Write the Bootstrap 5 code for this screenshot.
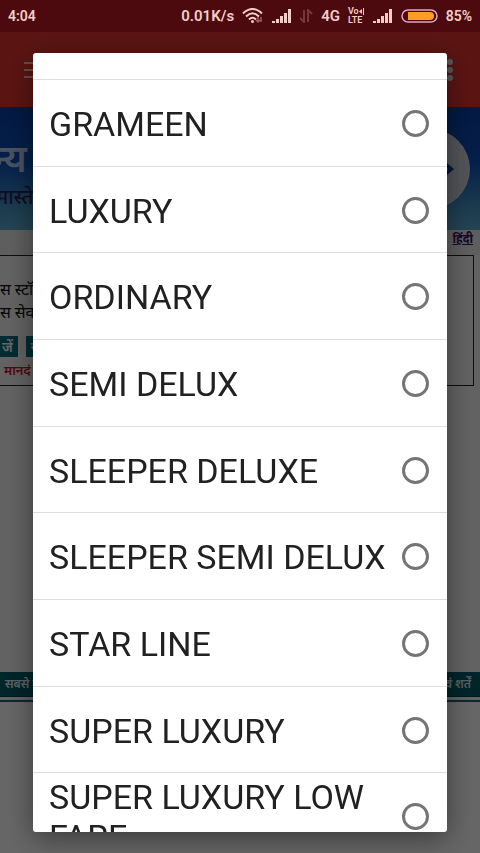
<!DOCTYPE html>
<html lang="en">
<head>
<meta charset="utf-8">
<meta name="viewport" content="width=device-width, initial-scale=1">
<title>Select bus type</title>
<link href="https://cdn.jsdelivr.net/npm/bootstrap@5.3.0/dist/css/bootstrap.min.css" rel="stylesheet">
<style>
body { font-family: Roboto, "Noto Sans", "Noto Sans Devanagari", sans-serif; background: #fff; }
.status-bar { height: 32px; background: #4c0a0e; color: #f3cdc9; font-size: 14px; font-weight: 600; padding: 0 8px; gap: 8px; z-index: 1060; }
.status-bar .speed { font-size: 15px; }
.status-bar svg { display: block; flex: none; }
.volte { font-size: 9px; line-height: 9px; }
.status-bar .volte svg { display: inline-block; }
.app-bar { height: 75px; background: #e2352f; padding: 0 24px; }
.bar-btn { border: 0; background: none; padding: 0; line-height: 0; }
.hero { height: 123px; background: linear-gradient(#0a3fa8, #0c4fba 45%, #4a9bc8 85%, #5fa9cc); color: #b8cdea; overflow: hidden; }
.hero-title { font-size: 38px; line-height: 44px; font-weight: 600; margin-left: -8px; }
.hero-sub { font-size: 20px; line-height: 24px; color: #2c2050; font-weight: 500; margin-left: -4px; }
.hero-next { width: 80px; height: 80px; border: 0; border-radius: 50%; background: #cdd4de; margin-right: 10px; padding: 0 14px 0 0; }
.lang { height: 25px; background: #ececec; padding: 0 7px; font-size: 12px; line-height: 18px; }
.lang a { color: #3b1466; font-weight: 700; }
.notice { height: 131px; border: 1px solid #222; border-left: 0; margin-right: 6px; font-size: 16px; line-height: 23px; color: #111; padding-top: 22px; overflow: hidden; }
.tag-btn { border: 0; border-radius: 0; background: #006b7c; color: #fff; height: 21px; font-size: 14px; line-height: 20px; padding: 0 5px; font-weight: 600; }
.tag-btn.first { padding-left: 2px; }
.crit { color: #d01020; font-size: 13px; line-height: 20px; font-weight: 600; }
.site { background: #f6f6f6; }
.blank { height: 286px; }
.site-foot { height: 25px; background: #005c68; color: #e4f2f4; font-size: 12px; line-height: 24px; padding: 0 9px 0 5px; font-weight: 600; border-bottom: 1px solid #003f48; }
.foot-line { border-top: 2px solid #006b7c; margin-top: 3px; }
.shade { background: rgba(0,0,0,.6); top: 32px; }
.picker-wrap { padding: 53px 33px 21px; z-index: 1055; }
.picker { background: #fff; border-radius: 3px; box-shadow: 0 6px 28px rgba(0,0,0,.45); overflow: hidden; }
.picker-edge { height: 27px; flex: none; border-bottom: 1px solid #dedede; }
.picker-list { flex: 1 1 0; margin-bottom: -28px; min-height: 0; }
.option { flex: 1 1 0; border-bottom: 1px solid #dedede; padding: 2px 17px 0 16px; font-size: 34px; line-height: 40px; color: #212121; cursor: pointer; }
.option .form-check-input { width: 27px; height: 27px; border: 3px solid #757575; margin: 0 1px 1px 0; flex: none; }
</style>
<script src="https://cdn.jsdelivr.net/npm/bootstrap@5.3.0/dist/js/bootstrap.bundle.min.js"></script>
</head>
<body class="overflow-hidden">
<header class="status-bar position-relative d-flex align-items-center">
  <span class="me-auto">4:04</span>
  <span class="speed">0.01K/s</span>
  <svg width="22" height="16" viewBox="0 0 22 16" fill="none" stroke="#f3cdc9" stroke-width="2"><path d="M1 5.500Q10.500-3.500 20 5.500M4 8.500Q10.500 2 17 8.500M7 11.500Q10.500 8 14 11.500"/><circle cx="10.500" cy="13.500" r="1.500" fill="#f3cdc9" stroke="none"/><path d="M16 14V9M14 12l2 2 2-2M19 14V9" stroke="#98605f" stroke-width="1.500"/></svg>
  <svg width="20" height="14" viewBox="0 0 20 14" fill="#f3cdc9"><path d="M0 12h3v2H0zM4 10h3v4H4zM8 7h3v7H8zM12 4h3v10h-3zM16 0h3v14h-3z"/></svg>
  <svg width="13" height="14" viewBox="0 0 13 14" fill="none" stroke="#74383a" stroke-width="2"><path d="M4 1v12L0 9M8 13V1l4 4"/></svg>
  <span class="speed">4G</span>
  <span class="volte text-nowrap">Vo<svg width="6" height="7" viewBox="0 0 6 7" fill="#f3cdc9"><path d="M0 3.500L3 1v5zM4 0h1v7H4z"/></svg><br>LTE</span>
  <svg width="20" height="14" viewBox="0 0 20 14" fill="#f3cdc9"><path d="M0 12h3v2H0zM4 10h3v4H4zM8 7h3v7H8zM12 4h3v10h-3zM16 0h3v14h-3z"/></svg>
  <svg class="me-n1" width="37" height="14" viewBox="0 0 37 14"><rect x="1" y="1" width="35" height="12" rx="6" fill="none" stroke="#dba6bd" stroke-width="1.500"/><path d="M7 3H29a4 4 0 0 1 0 8H7z" fill="#ff9c26"/></svg>
  <span>85%</span>
</header>
<div class="site">
  <nav class="app-bar d-flex align-items-center justify-content-between">
    <button class="bar-btn" aria-label="Menu"><svg width="24" height="18" viewBox="0 0 24 18" stroke="#f6c6c2" stroke-width="2"><path d="M0 2h24M0 9h24M0 16h24"/></svg></button>
    <button class="bar-btn" aria-label="More"><svg width="12" height="22" viewBox="0 0 12 22" fill="#ddd"><circle cx="6" cy="3" r="3"/><circle cx="6" cy="11" r="3"/><circle cx="6" cy="19" r="3"/></svg></button>
  </nav>
  <section class="hero d-flex justify-content-between align-items-center">
    <div class="pt-2"><div class="hero-title">न्य</div><div class="hero-sub mt-1">मास्ते</div></div>
    <button class="hero-next text-end" aria-label="Next"><svg width="14" height="20" viewBox="0 0 14 20" fill="none" stroke="#123b90" stroke-width="4"><path d="M2 4l7 6-7 6"/></svg></button>
  </section>
  <div class="lang text-end"><a href="#hi">हिंदी</a></div>
  <section class="notice">
    <div>स स्टॉ</div>
    <div>स सेव</div>
    <div class="d-flex gap-2 mt-2 pt-1"><button class="tag-btn first">जें</button><button class="tag-btn">सेवा</button></div>
    <div class="crit ms-1 mt-1">मानदं</div>
  </section>
  <div class="blank"></div>
  <footer class="site-foot d-flex justify-content-between"><span>सबसे ऊपर</span><span>एवं शर्तें</span></footer>
  <div class="foot-line"></div>
</div>
<div class="shade position-fixed start-0 end-0 bottom-0"></div>
<div class="picker-wrap position-fixed top-0 start-0 w-100 h-100">
  <form class="picker h-100 d-flex flex-column" role="dialog" aria-label="Bus type">
    <div class="picker-edge"></div>
    <div class="picker-list d-flex flex-column">
      <label class="option d-flex align-items-center justify-content-between" for="t1">GRAMEEN<input class="form-check-input" type="radio" name="type" id="t1"></label>
      <label class="option d-flex align-items-center justify-content-between" for="t2">LUXURY<input class="form-check-input" type="radio" name="type" id="t2"></label>
      <label class="option d-flex align-items-center justify-content-between" for="t3">ORDINARY<input class="form-check-input" type="radio" name="type" id="t3"></label>
      <label class="option d-flex align-items-center justify-content-between" for="t4">SEMI DELUX<input class="form-check-input" type="radio" name="type" id="t4"></label>
      <label class="option d-flex align-items-center justify-content-between" for="t5">SLEEPER DELUXE<input class="form-check-input" type="radio" name="type" id="t5"></label>
      <label class="option d-flex align-items-center justify-content-between" for="t6">SLEEPER SEMI DELUX<input class="form-check-input" type="radio" name="type" id="t6"></label>
      <label class="option d-flex align-items-center justify-content-between" for="t7">STAR LINE<input class="form-check-input" type="radio" name="type" id="t7"></label>
      <label class="option d-flex align-items-center justify-content-between" for="t8">SUPER LUXURY<input class="form-check-input" type="radio" name="type" id="t8"></label>
      <label class="option d-flex align-items-center justify-content-between" for="t9">SUPER LUXURY LOW FARE<input class="form-check-input" type="radio" name="type" id="t9"></label>
    </div>
  </form>
</div>
</body>
</html>
